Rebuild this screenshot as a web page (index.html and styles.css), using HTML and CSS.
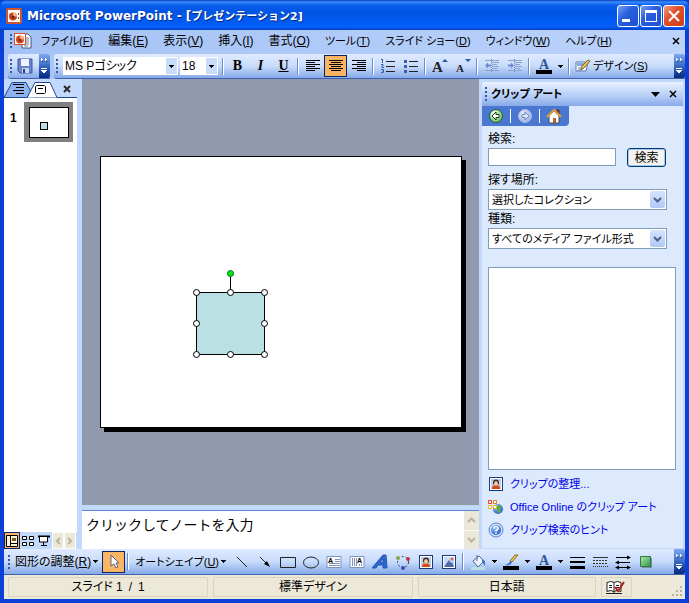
FILE: index.html
```html
<!DOCTYPE html>
<html lang="ja">
<head>
<meta charset="utf-8">
<title>Microsoft PowerPoint - [プレゼンテーション2]</title>
<link rel="stylesheet" href="styles.css">
</head>
<body>
<svg class="defs" width="0" height="0" aria-hidden="true">
  <defs>
    <radialGradient id="g-green" cx=".35" cy=".3" r=".8"><stop offset="0" stop-color="#f4fff0"/><stop offset="1" stop-color="#5fb84f"/></radialGradient>
    <linearGradient id="g-combo" x1="0" y1="0" x2="0" y2="1"><stop offset="0" stop-color="#d6e3fe"/><stop offset="1" stop-color="#b0c8f8"/></linearGradient>
    <radialGradient id="g-grey" cx=".35" cy=".3" r=".8"><stop offset="0" stop-color="#e2e9fa"/><stop offset="1" stop-color="#9aaee0"/></radialGradient>
    <radialGradient id="g-blue" cx=".35" cy=".3" r=".8"><stop offset="0" stop-color="#9cc3f8"/><stop offset="1" stop-color="#1e55c0"/></radialGradient>
    <linearGradient id="g-shade" x1="0" y1="0" x2="1" y2="1"><stop offset="0" stop-color="#b6e8b0"/><stop offset="1" stop-color="#2c9447"/></linearGradient>
    <symbol id="i-down" viewBox="0 0 5 3"><path d="M0 0H5V1H4V2H3V3H2V2H1V1H0Z" shape-rendering="crispEdges"/></symbol>
    <symbol id="i-more" viewBox="0 0 9 18">
      <path d="M1 1h1v1h1v1h-1v1h-1zM5 1h1v1h1v1h-1v1h-1z" fill="#fff"/>
      <path d="M1 11h6v1H1zM1 13h6v1H6v1H5v1H3v-1H2v-1H1z" fill="#fff"/>
      <path d="M2 4h1v1H2zM6 4h1v1H6zM7 14h1v1H7zM5 16h1v1H5z" fill="#0b2a6e"/>
    </symbol>
    <symbol id="i-combo" viewBox="0 0 15 17">
      <rect width="15" height="17" rx="2" fill="url(#g-combo)"/>
      <path d="M4 7l3.500 3.500L11 7" fill="none" stroke="#4d6185" stroke-width="2"/>
    </symbol>
    <symbol id="i-person" viewBox="0 0 14 14">
      <rect x=".5" y=".5" width="13" height="13" fill="#fff" stroke="#1e3a78"/>
      <rect x="2" y="2" width="10" height="10" fill="#b9cff3"/>
      <path d="M3 12q0-4 4-4t4 4z" fill="#d04a14"/>
      <circle cx="7" cy="5.500" r="3" fill="#3f2a22"/><ellipse cx="7" cy="6.500" rx="2" ry="2.500" fill="#f3c9a0"/>
    </symbol>
  </defs>
</svg>

<div class="window">
  <header class="titlebar">
    <svg width="16" height="16" viewBox="0 0 16 16"><rect x="1" y="1" width="14" height="14" rx="1" fill="#fff" stroke="#d2552a" stroke-width="2"/><circle cx="7" cy="8.500" r="4" fill="#c9431c"/><path d="M7 8.500V4.500A4 4 0 0 1 11 8.500Z" fill="#f9b28c"/><circle cx="7" cy="9" r="1.500" fill="#5b2414"/><path d="M12 5h1v2h-1zM12 9h1v2h-1z" fill="#b13f1c"/></svg>
    <h1>Microsoft PowerPoint - [<span class="kana">プレゼンテーション2]</span></h1>
    <button class="winbtn" aria-label="最小化"><svg width="20" height="20"><path d="M4 13h8v3H4z" fill="#fff"/></svg></button>
    <button class="winbtn" aria-label="最大化"><svg width="20" height="20"><path d="M4 4h12v12H4zM5 7v8h10V7z" fill="#fff" fill-rule="evenodd"/></svg></button>
    <button class="winbtn close" aria-label="閉じる"><svg width="20" height="20"><path d="M5 5l10 10M15 5L5 15" stroke="#fff" stroke-width="2"/></svg></button>
  </header>

  <nav class="menubar">
    <i class="grip"></i>
    <svg class="docicon" width="18" height="16" viewBox="0 0 18 16"><path d="M8 1h6l3 3v11H8z" fill="#fff" stroke="#44567c"/><path d="M10 5h5M10 7h5M10 9h5M10 11h5M10 13h4" stroke="#6b7fa8"/><rect x=".5" y=".5" width="11" height="11" fill="#fff" stroke="#d2552a"/><circle cx="6" cy="6.500" r="4" fill="#d2481e"/><path d="M6 6.500V2.500A4 4 0 0 1 10 6.500Z" fill="#f9b28c"/><circle cx="6" cy="7" r="1.500" fill="#7c2b14"/></svg>
    <button class="kana">ファイル(<u>F</u>)</button>
    <button>編集(<u>E</u>)</button>
    <button>表示(<u>V</u>)</button>
    <button>挿入(<u>I</u>)</button>
    <button>書式(<u>O</u>)</button>
    <button class="kana">ツール(<u>T</u>)</button>
    <button class="kana">スライド ショー(<u>D</u>)</button>
    <button class="kana">ウィンドウ(<u>W</u>)</button>
    <button class="kana">ヘルプ(<u>H</u>)</button>
    <button class="end" aria-label="文書を閉じる"><svg width="8" height="8"><path d="M1 1l6 6M7 1L1 7" stroke="#000" stroke-width="1.500"/></svg></button>
  </nav>

  <div class="toolrow">
    <div class="toolbar small">
      <i class="grip"></i>
      <button class="tool" aria-label="保存"><svg width="16" height="16" viewBox="0 0 16 16"><path d="M1 1h14v14H3l-2-2z" fill="#6a82cc" stroke="#3f58a8"/><rect x="4" y="1" width="8" height="7" fill="#eef3ff"/><rect x="5" y="10" width="7" height="5" fill="#c9d5ef"/><rect x="6" y="11" width="2" height="4" fill="#27418f"/></svg></button>
      <button class="more" aria-label="ツールバー オプション"><svg width="9" height="18"><use href="#i-more"/></svg></button>
    </div>
    <div class="toolbar wide">
      <i class="grip"></i>
      <div class="combo face"><select aria-label="フォント"><option>MS Pゴシック</option></select><span><svg width="5" height="3"><use href="#i-down"/></svg></span></div>
      <div class="combo size"><select aria-label="フォント サイズ"><option>18</option></select><span><svg width="5" height="3"><use href="#i-down"/></svg></span></div>
      <i class="sep"></i>
      <button class="tool serif" aria-label="太字"><b>B</b></button>
      <button class="tool serif" aria-label="斜体"><em>I</em></button>
      <button class="tool serif" aria-label="下線"><u>U</u></button>
      <i class="sep"></i>
      <button class="tool" aria-label="左揃え"><svg width="16" height="16"><path d="M1 2.500h14M1 4.500h9M1 6.500h14M1 8.500h9M1 10.500h14M1 12.500h9" stroke="#000"/></svg></button>
      <button class="tool on" aria-label="中央揃え"><svg width="16" height="16"><path d="M1 2.500h14M3 4.500h10M1 6.500h14M3 8.500h10M1 10.500h14M3 12.500h10" stroke="#000"/></svg></button>
      <button class="tool" aria-label="右揃え"><svg width="16" height="16"><path d="M1 2.500h14M6 4.500h9M1 6.500h14M6 8.500h9M1 10.500h14M6 12.500h9" stroke="#000"/></svg></button>
      <i class="sep"></i>
      <button class="tool" aria-label="段落番号"><svg width="16" height="16"><path d="M6 3.500h9M6 8.500h9M6 13.500h9" stroke="#222"/><path d="M2.500 1v4M1 1.500h1M1 6.500h2v1.500h-1v1.500h2M1 11.500h2.500v3H1M2 13h1" stroke="#3a5fae" fill="none"/></svg></button>
      <button class="tool" aria-label="箇条書き"><svg width="16" height="16"><path d="M6 3.500h9M6 8.500h9M6 13.500h9" stroke="#222"/><path d="M1 2h3v3H1zM1 7h3v3H1zM1 12h3v3H1z" fill="#3a5fae"/></svg></button>
      <i class="sep"></i>
      <button class="tool" aria-label="フォント サイズの拡大"><svg width="16" height="16"><text x="0" y="14" class="ltr big">A</text><path d="M10 4h6l-3-3z" fill="#2b55a8"/></svg></button>
      <button class="tool" aria-label="フォント サイズの縮小"><svg width="16" height="16"><text x="1" y="14" class="ltr">A</text><path d="M10 1h6l-3 3z" fill="#2b55a8"/></svg></button>
      <i class="sep"></i>
      <button class="tool" aria-label="インデント解除"><svg width="16" height="16"><path d="M1 2.500h14M8 4.500h7M8 6.500h5M8 8.500h7M8 10.500h5M1 12.500h14" stroke="#8da3cf"/><path d="M7.500 1v14" stroke="#6f8cc6" stroke-dasharray="1 1"/><path d="M1 7.500l3-3v2h3v2H4v2z" fill="#6b8dd0"/></svg></button>
      <button class="tool" aria-label="インデント"><svg width="16" height="16"><path d="M1 2.500h14M8 4.500h7M8 6.500h5M8 8.500h7M8 10.500h5M1 12.500h14" stroke="#8da3cf"/><path d="M7.500 1v14" stroke="#6f8cc6" stroke-dasharray="1 1"/><path d="M7 7.500l-3-3v2H1v2h3v2z" fill="#6b8dd0"/></svg></button>
      <i class="sep"></i>
      <button class="tool" aria-label="フォントの色"><svg width="16" height="16"><text x="3" y="11" class="ltr blue">A</text><path d="M0 12h16v4H0z"/></svg></button>
      <button class="drop" aria-label="フォントの色の選択"><svg width="5" height="3"><use href="#i-down"/></svg></button>
      <i class="sep"></i>
      <button class="tool label kana"><svg width="16" height="16"><path d="M1 4h12l-2 9H1z" fill="#fff" stroke="#5879b8"/><path d="M2 5h9l-1 3H2z" fill="#86a9e2"/><path d="M3 10h4M3 12h3" stroke="#5879b8"/><path d="M15 3l-6 7-3 2 1-4 6-6z" fill="#f3c64b" stroke="#7b6222"/></svg><span>デザイン(<u>S</u>)</span></button>
      <button class="more" aria-label="ツールバー オプション"><svg width="9" height="18"><use href="#i-more"/></svg></button>
    </div>
  </div>

  <main class="work">
    <aside class="outline">
      <div class="tabs">
        <svg width="56" height="19" viewBox="0 0 56 19"><path d="M0 18.500L8 3.500H22L30 18.500" fill="#8fb3ee" stroke="#1e4793"/><path d="M9 5.500h11M12 8.500h8M9 11.500h11M12 14.500h8" stroke="#000"/><path d="M0 18.500H24L31 3.500H46L53 18.500" fill="#fff"/><path d="M0 18.500H23L31 3.500H46L53 18.500H56" fill="none" stroke="#1e4793"/><path d="M9 5.500h11M12 8.500h8M9 11.500h11M12 14.500h8" stroke="#000"/><path d="M32.500 6.500h8l1 1v6l-1 1h-8l-1-1v-6zM34 9.500h5" fill="#fff" stroke="#000"/></svg>
        <button aria-label="閉じる"><svg width="8" height="8"><path d="M1 1l6 6M7 1L1 7" stroke="#2a2a2a" stroke-width="2"/></svg></button>
      </div>
      <ol class="thumbs">
        <li><b>1</b><button aria-label="スライド 1"><svg width="43" height="34" viewBox="0 0 43 34"><rect x="2.500" y="2.500" width="39" height="30" fill="#fff" stroke="#000"/><rect x="13.500" y="17.500" width="7" height="7" fill="#bbe0e3" stroke="#000"/></svg></button></li>
      </ol>
      <div class="views">
        <button class="on" aria-label="標準表示"><svg width="12" height="12"><path d="M.5 .5h11v11H.5zM4.500 .5v11M4.500 8.500h7" fill="#fff3d8" stroke="#000"/><path d="M6 3h4v3H6z" fill="#7a5a2a"/></svg></button>
        <button aria-label="スライド一覧"><svg width="12" height="12"><path d="M.5 1.500h4v3h-4zM7.500 1.500h4v3h-4zM.5 7.500h4v3h-4zM7.500 7.500h4v3h-4z" fill="#fff" stroke="#000"/></svg></button>
        <button aria-label="スライド ショー"><svg width="12" height="12"><path d="M0 1.500h12" stroke="#000" stroke-width="2"/><path d="M1.500 2v5h8V2M5.500 7v3M3 10.500h6" fill="#fff" stroke="#000"/></svg></button>
        <button class="arrow" disabled aria-label="左"><svg width="6" height="8"><path d="M5 1L2 4l3 3" fill="none" stroke="#b9b49f" stroke-width="2"/></svg></button>
        <button class="arrow" disabled aria-label="右"><svg width="6" height="8"><path d="M1 1l3 3-3 3" fill="none" stroke="#b9b49f" stroke-width="2"/></svg></button>
      </div>
    </aside>

    <section class="center">
      <div class="stage">
        <svg class="slide" viewBox="0 0 366 276">
          <path d="M4 4H366V276H4z"/>
          <rect x=".5" y=".5" width="361" height="271" fill="#fff" stroke="#000"/>
          <rect x="96.500" y="136.500" width="68" height="62" fill="#bbe0e3" stroke="#000"/>
          <path d="M130.500 118v18" stroke="#000"/>
          <g fill="#fff" stroke="#000"><circle cx="96.500" cy="136.500" r="3"/><circle cx="130.500" cy="136.500" r="3"/><circle cx="164.500" cy="136.500" r="3"/><circle cx="96.500" cy="167.500" r="3"/><circle cx="164.500" cy="167.500" r="3"/><circle cx="96.500" cy="198.500" r="3"/><circle cx="130.500" cy="198.500" r="3"/><circle cx="164.500" cy="198.500" r="3"/></g>
          <circle cx="130.500" cy="117.500" r="3" fill="#0e0" stroke="#063"/>
        </svg>
      </div>
      <div class="notes">
        <textarea aria-label="ノート">クリックしてノートを入力</textarea>
        <div class="scroll">
          <button disabled aria-label="上へ"><svg width="9" height="6"><path d="M1 5l3.500-3.500L8 5" fill="none" stroke="#b9b49f" stroke-width="2"/></svg></button>
          <button disabled aria-label="下へ"><svg width="9" height="6"><path d="M1 1l3.500 3.500L8 1" fill="none" stroke="#b9b49f" stroke-width="2"/></svg></button>
        </div>
      </div>
    </section>

    <aside class="pane">
      <div class="panehead">
        <i class="grip"></i>
        <h2>クリップ アート</h2>
        <button aria-label="作業ウィンドウの選択"><svg width="9" height="5"><path d="M0 0h9L4.500 5z"/></svg></button>
        <button aria-label="閉じる"><svg width="8" height="8"><path d="M1 1l6 6M7 1L1 7" stroke="#000" stroke-width="1.500"/></svg></button>
      </div>
      <div class="panebody">
        <div class="panenav">
          <button aria-label="戻る"><svg width="16" height="16"><circle cx="8" cy="8" r="6.500" fill="url(#g-green)" stroke="#1e5b2a"/><path d="M4 8l4-4v2.500h3v3H8V12z" fill="#fff" stroke="#163c18"/></svg></button><i></i>
          <button aria-label="進む" disabled><svg width="16" height="16"><circle cx="8" cy="8" r="6.500" fill="url(#g-grey)" stroke="#a9baea"/><path d="M12 8L8 4v2.500H5v3h3V12z" fill="#dde5fa" stroke="#7088c8"/></svg></button><i></i>
          <button aria-label="ホーム"><svg width="16" height="16"><path d="M11 2h2v5h-2z" fill="#b34a26" stroke="#5a2a18"/><path d="M3 8l5-5 5 5v7H3z" fill="#fff" stroke="#4a4a4a"/><path d="M1 9l7-7 7 7" fill="none" stroke="#e0a03a" stroke-width="2"/><path d="M7 10h3v5H7z" fill="#a8662a"/></svg></button>
        </div>
        <form class="search" onsubmit="return false">
          <label for="q">検索:</label>
          <div class="query"><input id="q" type="text"><button>検索</button></div>
          <label for="where">探す場所:</label>
          <div class="pick"><select id="where"><option>選択したコレクション</option></select><svg width="15" height="17"><use href="#i-combo"/></svg></div>
          <label for="kind">種類:</label>
          <div class="pick"><select id="kind"><option>すべてのメディア ファイル形式</option></select><svg width="15" height="17"><use href="#i-combo"/></svg></div>
        </form>
        <div class="results"></div>
        <ul class="links">
          <li><svg width="16" height="16" viewBox="-1 -1 16 16"><use href="#i-person" width="14" height="14"/></svg><a href="#">クリップの整理...</a></li>
          <li><svg width="16" height="16"><circle cx="10" cy="10" r="5" fill="url(#g-blue)"/><path d="M8 8l3-2 3 3-2 1 1 3-3 1z" fill="#56ad4c"/><path d="M.5 1.500h3v3h-3z" fill="#fff" stroke="#e0401c"/><path d="M5.500 1.500h3v3h-3z" fill="#fff" stroke="#ee7a24"/><path d="M.5 6.500h3v3h-3z" fill="#fff" stroke="#e9b520"/><path d="M5.500 6.500h3v3h-3z" fill="#fff" stroke="#e9b520"/></svg><a href="#">Office Online のクリップ アート</a></li>
          <li><svg width="16" height="16"><circle cx="8" cy="8" r="7" fill="#cfe0fa" stroke="#5c84cc"/><circle cx="8" cy="8" r="5" fill="url(#g-blue)"/><path d="M6 6.500q0-2 2-2t2 2q0 1-2 2v1M8 10.500v1.500" fill="none" stroke="#fff" stroke-width="1.500"/></svg><a href="#">クリップ検索のヒント</a></li>
        </ul>
      </div>
    </aside>
  </main>

  <div class="toolbar draw">
    <i class="grip"></i>
    <button class="text"><span>図形の調整(<u>R</u>)</span><svg width="5" height="3"><use href="#i-down"/></svg></button>
    <button class="tool on" aria-label="オブジェクトの選択"><svg width="16" height="16"><path d="M5 1v11l3-2 2 4 2-1-2-4h3z" fill="#fff" stroke="#55607c"/></svg></button>
    <i class="sep"></i>
    <button class="text kana"><span>オートシェイプ(<u>U</u>)</span><svg width="5" height="3"><use href="#i-down"/></svg></button>
    <button class="tool" aria-label="直線"><svg width="16" height="16"><path d="M3 3l10 10" stroke="#222"/></svg></button>
    <button class="tool" aria-label="矢印"><svg width="16" height="16"><path d="M3 3l7 7" stroke="#222"/><path d="M13 13l-6-3 3-3z"/></svg></button>
    <button class="tool" aria-label="四角形"><svg width="16" height="16"><path d="M.5 3.500h15v10H.5z" fill="none" stroke="#222"/></svg></button>
    <button class="tool" aria-label="楕円"><svg width="16" height="16"><ellipse cx="8" cy="8.500" rx="7.500" ry="5.500" fill="none" stroke="#222"/></svg></button>
    <button class="tool" aria-label="テキスト ボックス"><svg width="16" height="16"><path d="M1 2.500h14v11H1z" fill="#fff" stroke="#7d94bd"/><text x="2" y="9" class="tiny">A</text><path d="M9 5.500h5M9 7.500h5M3 9.500h11M3 11.500h11" stroke="#7d94bd"/></svg></button>
    <button class="tool" aria-label="縦書きテキスト ボックス"><svg width="16" height="16"><path d="M1 2.500h14v11H1z" fill="#fff" stroke="#7d94bd"/><text x="8" y="9" class="tiny">A</text><path d="M3.500 4v8M5.500 4v8M7.500 4v8M10.500 10v2M12.500 10v2" stroke="#7d94bd"/></svg></button>
    <button class="tool" aria-label="ワードアート"><svg width="16" height="16"><path d="M0 14L11 1h3l1 13h-4v-3H6l-2 3zM8 8.500h3V5z" fill="#2c66c8" stroke="#2458b4" fill-rule="evenodd"/></svg></button>
    <button class="tool" aria-label="図表"><svg width="16" height="16"><circle cx="8" cy="8" r="5.500" fill="none" stroke="#333" stroke-dasharray="2 2"/><circle cx="3" cy="4" r="2" fill="#7fa84c"/><circle cx="13" cy="5" r="2" fill="#c5304c"/><circle cx="8" cy="14" r="2" fill="#3c50a8"/></svg></button>
    <button class="tool" aria-label="クリップアート"><svg width="14" height="14"><use href="#i-person"/></svg></button>
    <button class="tool" aria-label="図の挿入"><svg width="14" height="14"><rect x=".5" y=".5" width="13" height="13" fill="#fff" stroke="#1e3a78"/><path d="M2 2h10v10H2z" fill="#c3d8fa"/><path d="M2 12l5-7 2 3 1-1 2 5z" fill="#4d69a8"/><circle cx="10" cy="4" r="1.500" fill="#e06a2c"/></svg></button>
    <i class="sep"></i>
    <button class="tool" aria-label="塗りつぶしの色"><svg width="16" height="16"><path d="M1 13h14v3H1z" fill="#bbe0e3"/><path d="M3 7l6-5 5 5-6 6z" fill="#f2f6ff" stroke="#4e6597"/><path d="M7 1v6" stroke="#4e6597"/><path d="M12 5q4 1 3 7-2-3-3-4z" fill="#3c6fd0"/></svg></button>
    <button class="drop" aria-label="塗りつぶしの色の選択"><svg width="5" height="3"><use href="#i-down"/></svg></button>
    <button class="tool" aria-label="線の色"><svg width="16" height="16"><path d="M0 12h16v4H0z"/><path d="M15 1l-6 7-2-1 5-6z" fill="#f3c64b" stroke="#8a6d24"/><path d="M9 8q-1 4-7 3 4-1 5-4z" fill="#3c6fd0"/></svg></button>
    <button class="drop" aria-label="線の色の選択"><svg width="5" height="3"><use href="#i-down"/></svg></button>
    <button class="tool" aria-label="フォントの色"><svg width="16" height="16"><text x="3" y="11" class="ltr blue">A</text><path d="M0 12h16v4H0z"/></svg></button>
    <button class="drop" aria-label="フォントの色の選択"><svg width="5" height="3"><use href="#i-down"/></svg></button>
    <button class="tool" aria-label="線のスタイル"><svg width="16" height="16"><path d="M1 3h15v1H1zM1 7h15v2H1zM1 12h15v3H1z"/></svg></button>
    <button class="tool" aria-label="実線/点線"><svg width="16" height="16"><path d="M1 3.500h15" stroke="#333"/><path d="M1 6.500h15M1 9.500h15" stroke="#333" stroke-dasharray="2 1"/><path d="M1 12.500h15" stroke="#333" stroke-dasharray="1 1"/></svg></button>
    <button class="tool" aria-label="矢印のスタイル"><svg width="16" height="16"><path d="M1 3.500h13M2 8.500h13M2 13.500h12" stroke="#000"/><path d="M16 3.500l-4-2v4zM0 8.500l4-2v4zM0 13.500l4-2v4zM16 13.500l-4-2v4z"/></svg></button>
    <button class="tool" aria-label="影付きスタイル"><svg width="16" height="16"><path d="M4 4h10v10H4z" fill="#7d8da8"/><path d="M2.500 2.500h10v10h-10z" fill="url(#g-shade)" stroke="#2c7a3e"/></svg></button>
    <button class="more" aria-label="ツールバー オプション"><svg width="9" height="18"><use href="#i-more"/></svg></button>
  </div>

  <footer class="status">
    <span>スライド 1&ensp;/&ensp;1</span>
    <span>標準デザイン</span>
    <span>日本語</span>
    <span class="spell"><svg width="20" height="15"><path d="M1 2.500q4-2 7 0 3-2 7 0v9q-4-2-7 0-3-2-7 0z" fill="#fff" stroke="#222"/><path d="M0 13.500h16M8 3v10M3 5.500h3M3 7.500h3M10 7.500h3M10 5.500h3" stroke="#222"/><path d="M9 7l3 4 6-9" fill="none" stroke="#b01c1c" stroke-width="2"/></svg></span>
    <span class="gripper"><svg width="12" height="12"><path d="M9 1h2v2H9zM5 5h2v2H5zM9 5h2v2H9zM1 9h2v2H1zM5 9h2v2H5zM9 9h2v2H9z" fill="#b8b4a2"/></svg></span>
  </footer>
</div>
</body>
</html>
```

FILE: styles.css
```css
* { box-sizing: border-box; }

body {
  margin: 0;
  font: 12px/16px "Liberation Sans", "Noto Sans CJK JP", sans-serif;
  font-feature-settings: "palt";
  color: #000;
}

button, input, select, textarea {
  font: inherit;
  font-feature-settings: inherit;
  color: inherit;
  margin: 0;
  padding: 0;
  border: 0;
  border-radius: 0;
  background: none;
  white-space: nowrap;
}

select { appearance: none; min-width: 0; }
svg { display: block; flex: none; }
.defs { position: absolute; }
.kana { font-size: 11px; }

.window {
  display: grid;
  grid-template-rows: 30px 24px 25px minmax(0, 1fr) 26px 24px;
  height: 100vh;
  padding: 0 4px 4px;
  background: #0a3fd8;
}

/* Title bar */
.titlebar {
  display: flex;
  align-items: center;
  gap: 1px;
  margin: 0 -4px;
  padding: 2px 4px 0 6px;
  border-radius: 7px 7px 0 0;
  background: linear-gradient(#0842c4 0, #3a8dfa 2px, #0a5ff0 5px, #0054e3 12px, #005cf8 24px, #0a60fa 27px, #003fc8 30px);
}

.titlebar h1 {
  flex: 1;
  margin: 0 0 0 4px;
  font: bold 12px/16px "DejaVu Sans", "Noto Sans CJK JP", sans-serif;
  color: #fff;
  text-shadow: 1px 1px #0a2a80;
  white-space: nowrap;
}

.winbtn {
  width: 22px;
  height: 22px;
  border: 1px solid #fff;
  border-radius: 3px;
  background: linear-gradient(135deg, #7a9ff5, #2a5fe0 40%, #1d4fd0);
}

.winbtn.close { background: linear-gradient(135deg, #f0a088, #e0502c 40%, #c8401c); }

/* Menu bar */
.menubar {
  display: flex;
  align-items: center;
  gap: 15px;
  padding: 0 5px 2px 6px;
  background: linear-gradient(90deg, #a4c2f5, #bcd3fb);
}

.menubar .docicon { margin: 0 -6px 0 -14px; }
.menubar .end { margin-left: auto; }

.grip {
  flex: none;
  width: 3px;
  height: 14px;
  background: repeating-linear-gradient(#3a56a0 0 2px, transparent 2px 4px);
  background-size: 2px 100%;
  background-repeat: no-repeat;
}

/* Toolbars */
.toolrow {
  display: flex;
  gap: 4px;
  padding-left: 4px;
  background: #a9c6f6;
}

.toolbar {
  display: flex;
  align-items: center;
  padding-left: 2px;
  border-bottom: 1px solid #3f62b0;
  border-radius: 3px 0 0 3px;
  background: linear-gradient(#dfeaff, #c8dcfb 50%, #86a9e8);
}

.toolbar.small { width: 42px; }
.toolbar.wide { flex: 1; min-width: 0; }

.tool {
  display: flex;
  flex: none;
  align-items: center;
  justify-content: center;
  width: 23px;
  height: 22px;
}

.tool.on { border: 1px solid #0a246a; background: #fcb565; }
.tool.label { width: auto; gap: 2px; padding-left: 3px; }
.serif { font: bold 14px/16px "Liberation Serif", serif; }

.drop {
  display: flex;
  flex: none;
  align-items: center;
  justify-content: center;
  width: 11px;
  height: 22px;
}

.sep {
  flex: none;
  width: 6px;
  height: 17px;
  background: linear-gradient(90deg, transparent 2px, #6a8ccb 2px 3px, #fff 3px 4px, transparent 4px);
}

.more {
  display: flex;
  flex: none;
  align-items: center;
  justify-content: center;
  align-self: stretch;
  width: 11px;
  margin-left: auto;
  border-radius: 0 2px 2px 0;
  background: linear-gradient(#7fa8ee, #2c5cb8 60%, #06277e);
}

.combo {
  display: grid;
  grid-template-columns: 1fr 11px;
  height: 18px;
  margin-right: 2px;
  padding: 1px;
  background: #fff;
}

.combo select { padding-left: 1px; }
.combo span { display: grid; place-items: center; background: #c9dcf9; }
.face { width: 115px; margin-left: 4px; }
.size { width: 38px; }

.ltr { font: bold 11px "Liberation Serif", serif; fill: #222; }
.ltr.big { font-size: 15px; }
.ltr.blue { font-size: 14px; fill: #2f5496; }
.tiny { font: bold 7px "Liberation Sans", sans-serif; }

/* Work area */
.work {
  display: grid;
  grid-template-columns: 73px minmax(0, 1fr) 205px;
  background: #c3d9fb;
}

.outline { display: flex; flex-direction: column; background: #fff; }

.tabs {
  display: flex;
  align-items: center;
  gap: 3px;
  background: linear-gradient(#c3d9fb 18px, #1e4793 18px);
}

.thumbs { flex: 1; margin: 0; padding: 4px 4px 0 6px; list-style: none; }
.thumbs li { display: flex; justify-content: space-between; }
.thumbs b { padding-top: 8px; }
.thumbs button { padding: 3px; border: 0; background: #808080; }

.views { display: flex; height: 17px; background: #c3d9fb; }
.views button { display: grid; place-items: center; width: 16px; }
.views .on { border: 1px solid #0a246a; background: #fcb565; }
.views .arrow { width: 12px; border: 1px solid #fff; background: #ebe8da; }

.center {
  display: flex;
  flex-direction: column;
  min-width: 0;
  margin: 0 1px 0 5px;
}

.stage {
  display: flex;
  flex: 1;
  align-items: center;
  justify-content: center;
  min-height: 0;
  padding: 4px 0 0 5px;
  background: #9199ae;
}

.slide { flex: 0 1 366px; min-width: 0; }

.notes {
  display: flex;
  height: 39px;
  margin-top: 5px;
  border-top: 1px solid #5d87cc;
  background: #fff;
}

.notes textarea {
  flex: 1;
  min-width: 0;
  padding: 4px 4px 0;
  resize: none;
  font: 14px/18px "Noto Sans CJK JP", sans-serif;
  overflow: hidden;
}

.scroll { display: grid; gap: 1px; width: 15px; background: #fbfaf5; }
.scroll button { display: grid; place-items: center; background: #ebe8da; }

/* Task pane */
.pane {
  display: flex;
  flex-direction: column;
  min-height: 0;
  padding: 3px 2px 1px;
  background: #c3d9fb;
}

.panehead {
  display: flex;
  align-items: center;
  gap: 9px;
  height: 24px;
  padding: 0 6px 0 3px;
  background: linear-gradient(#e8f1ff, #b5cdf6 60%, #86a9e8);
}

.panehead h2 { flex: 1; margin: 0 0 0 -6px; font-size: 11px; line-height: 16px; }

.panebody {
  display: flex;
  flex: 1;
  flex-direction: column;
  min-height: 0;
  border-radius: 0 4px 0 0;
  background: #ddeafe;
}

.panenav {
  display: flex;
  align-items: center;
  align-self: flex-start;
  gap: 6px;
  height: 20px;
  padding: 0 7px 0 6px;
  border-radius: 0 0 4px 0;
  background: #4a78d0;
}

.panenav i { width: 1px; height: 14px; background: #fff; }

.search { display: flex; flex-direction: column; padding: 4px 16px 0 6px; }
.search label { line-height: 18px; }

.query { display: flex; gap: 11px; height: 20px; margin: 0 1px 3px 0; }
.query input { flex: 1; min-width: 0; height: 18px; border: 1px solid #7f9db9; background: #fff; }

.query button {
  width: 39px;
  height: 19px;
  border: 1px solid #003c74;
  border-radius: 3px;
  background: #f4f3ee;
  box-shadow: inset 0 0 0 1px #a9c4f0;
}

.pick {
  display: grid;
  grid-template-columns: 1fr 15px;
  align-items: center;
  height: 21px;
  padding: 1px 1px 1px 3px;
  border: 1px solid #7f9db9;
  background: #fff;
  font-size: 11px;
}

.results { flex: 1; margin: 18px 7px 0 6px; border: 1px solid #7f9db9; background: #fff; }

.links { margin: 0; padding: 2px 0 7px 6px; list-style: none; font-size: 11px; }
.links li { display: flex; align-items: center; gap: 6px; height: 23px; }
.links a { color: #0000e8; text-decoration: none; white-space: nowrap; }

/* Drawing toolbar */
.draw { padding-left: 4px; border-radius: 0; }
.draw .text { display: flex; align-items: center; gap: 2px; padding: 0 4px; }
.draw .drop { width: 10px; }

/* Status bar */
.status {
  display: grid;
  grid-template-columns: 200fr 199fr 178fr 31px 46px;
  gap: 5px;
  align-items: stretch;
  padding: 2px 2px 2px 4px;
  background: #ece9d8;
}

.status span {
  display: grid;
  place-items: center;
  border: 1px solid #d8d4c0;
  border-radius: 1px;
}

.status .gripper { place-items: end; border: 0; }
```
